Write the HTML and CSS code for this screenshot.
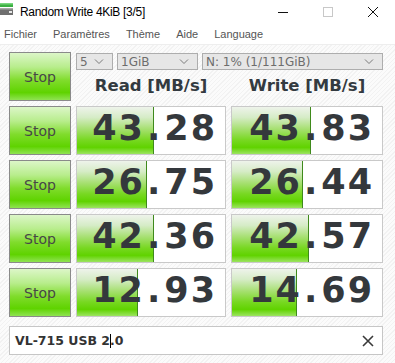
FILE: index.html
```
<!DOCTYPE html>
<html lang="fr">
<head>
    <meta charset="UTF-8">
    <title>Random Write 4KiB [3/5]</title>
    <link rel="stylesheet" href="styles.css">
</head>
<body>
    <header class="titlebar">
        <svg class="app-icon" viewBox="0 0 14 13">
            <rect x="0" y="0" width="13" height="4" fill="#3cb043"/>
            <rect x="0" y="0" width="13" height="1.5" fill="#7ad67f"/>
            <rect x="0" y="5" width="13" height="7" fill="#6f6f6f"/>
            <rect x="0" y="5" width="13" height="1.5" fill="#a8a8a8"/>
            <rect x="9" y="8" width="3" height="2" fill="#e8e8e8"/>
        </svg>
        <span class="title">Random Write 4KiB [3/5]</span>
        <div class="controls">
            <span class="ctl"><svg width="10" height="10" viewBox="0 0 10 10"><path d="M0 5.5h10" stroke="#111" stroke-width="1"/></svg></span>
            <span class="ctl"><svg width="10" height="10" viewBox="0 0 10 10"><rect x="0.5" y="0.5" width="9" height="9" fill="none" stroke="#c8c8c8"/></svg></span>
            <span class="ctl"><svg width="10" height="10" viewBox="0 0 10 10"><path d="M0 0l10 10M10 0L0 10" stroke="#111" stroke-width="1"/></svg></span>
        </div>
    </header>

    <nav class="menubar">
        <span>Fichier</span>
        <span>Paramètres</span>
        <span>Thème</span>
        <span>Aide</span>
        <span>Language</span>
    </nav>

    <main class="bench">
        <div class="grid">
            <button class="stop">Stop</button>
            <div class="setup">
                <div class="selects">
                    <div class="select sel-count">5 <svg width="10" height="6" viewBox="0 0 10 6"><path d="M1 0.5l4 4 4-4" fill="none" stroke="#7a7a7a"/></svg></div>
                    <div class="select sel-size">1GiB <svg width="10" height="6" viewBox="0 0 10 6"><path d="M1 0.5l4 4 4-4" fill="none" stroke="#7a7a7a"/></svg></div>
                    <div class="select sel-drive">N: 1% (1/111GiB) <svg width="10" height="6" viewBox="0 0 10 6"><path d="M1 0.5l4 4 4-4" fill="none" stroke="#7a7a7a"/></svg></div>
                </div>
                <div class="heads">
                    <div>Read [MB/s]</div>
                    <div>Write [MB/s]</div>
                </div>
            </div>

            <button class="stop">Stop</button>
            <div class="score" style="--fill: 77px">43<span class="dot">.</span>28</div>
            <div class="score" style="--fill: 79px">43<span class="dot">.</span>83</div>

            <button class="stop">Stop</button>
            <div class="score" style="--fill: 70px">26<span class="dot">.</span>75</div>
            <div class="score" style="--fill: 71px">26<span class="dot">.</span>44</div>

            <button class="stop">Stop</button>
            <div class="score" style="--fill: 77px">42<span class="dot">.</span>36</div>
            <div class="score" style="--fill: 77px">42<span class="dot">.</span>57</div>

            <button class="stop">Stop</button>
            <div class="score" style="--fill: 61px">12<span class="dot">.</span>93</div>
            <div class="score" style="--fill: 65px">14<span class="dot">.</span>69</div>
        </div>

        <div class="comment">
            <span class="comment-text">VL-715 USB 2<span class="caret"></span>.0</span>
            <svg width="12" height="12" viewBox="0 0 12 12"><path d="M1 1l10 10M11 1L1 11" stroke="#3a3a3a" stroke-width="1.6"/></svg>
        </div>
    </main>
</body>
</html>
```

FILE: styles.css
```
* {
    box-sizing: border-box;
}
body {
    margin: 0;
    width: 395px;
    height: 363px;
    overflow: hidden;
    background-color: #fff;
    font-family: "DejaVu Sans", Verdana, sans-serif;
}
.titlebar {
    height: 24px;
    display: flex;
    align-items: flex-start;
    background-color: #fff;
}
.app-icon {
    width: 14px;
    height: 13px;
    margin: 3px 6px 0 0;
}
.title {
    flex: 1;
    font: 12px/24px "Liberation Sans", Arial, sans-serif;
    letter-spacing: -0.3px;
    color: #000;
}
.controls {
    display: flex;
}
.ctl {
    width: 45px;
    height: 24px;
    display: flex;
    align-items: center;
    justify-content: center;
}
.menubar {
    height: 21px;
    display: flex;
    gap: 16px;
    padding-left: 4px;
    font: 11px/20px "Liberation Sans", Arial, sans-serif;
    color: #555;
    background-color: #fff;
    border-bottom: 1px solid #eeeeee;
}
.bench {
    height: 318px;
    padding: 7px 0 0 9px;
    background-color: #fafafa;
    background-image: repeating-linear-gradient(135deg, #f2f2f2 0 1px, #fbfbfb 1px 3px);
}
.grid {
    display: grid;
    grid-template-columns: 62px 150px 152px;
    grid-auto-rows: 49px;
    gap: 5px;
}
.stop {
    padding: 0;
    border: 1px solid #8a8a8a;
    background: linear-gradient(#dcf6c8 0%, #b8ed8c 30%, #80dc2c 58%, #5fd300 84%, #8fe352 100%);
    font: 14px "DejaVu Sans", sans-serif;
    color: #474747;
}
.setup {
    grid-column: span 2;
}
.selects {
    display: flex;
    gap: 4px;
    margin-top: 1px;
}
.select {
    height: 17px;
    display: flex;
    align-items: center;
    justify-content: space-between;
    padding: 0 8px 0 3px;
    border: 1px solid #adadad;
    background-color: #e6e6e6;
    color: #6d6d6d;
    font-size: 12px;
}
.sel-count {
    width: 37px;
}
.sel-size {
    width: 81px;
}
.sel-drive {
    width: 181px;
}
.heads {
    display: grid;
    grid-template-columns: 150px 152px;
    gap: 5px;
    margin-top: 6px;
    font: bold 16.5px/20px "DejaVu Sans", sans-serif;
    color: #333a40;
    text-align: center;
}
.score {
    padding: 0 8px 4px 0;
    border: 1px solid #c9c9c9;
    background-color: #fff;
    background-image: linear-gradient(#3f8a1c, #3f8a1c),
        linear-gradient(#eef3eb 0%, #d6ecc7 22%, #a8e074 46%, #78d822 70%, #60d300 86%, #9ce460 100%);
    background-repeat: no-repeat;
    background-size: 1px 100%, var(--fill) 100%;
    background-position: calc(var(--fill) - 1px) 0, 0 0;
    text-align: right;
    font: bold 35px/43px "DejaVu Sans", sans-serif;
    letter-spacing: 2px;
    color: #34383c;
}
.dot {
    margin: 0 2px;
}
.comment {
    width: 374px;
    height: 29px;
    margin-top: 9px;
    display: flex;
    align-items: center;
    justify-content: space-between;
    padding: 0 8px 0 5px;
    border: 1px solid #c6c6c6;
    background-color: #fff;
}
.comment-text {
    font: bold 12.5px "DejaVu Sans", sans-serif;
    color: #333;
}
.caret {
    display: inline-block;
    width: 1px;
    height: 14px;
    margin-right: -1px;
    vertical-align: -3px;
    background-color: #000;
}
```
